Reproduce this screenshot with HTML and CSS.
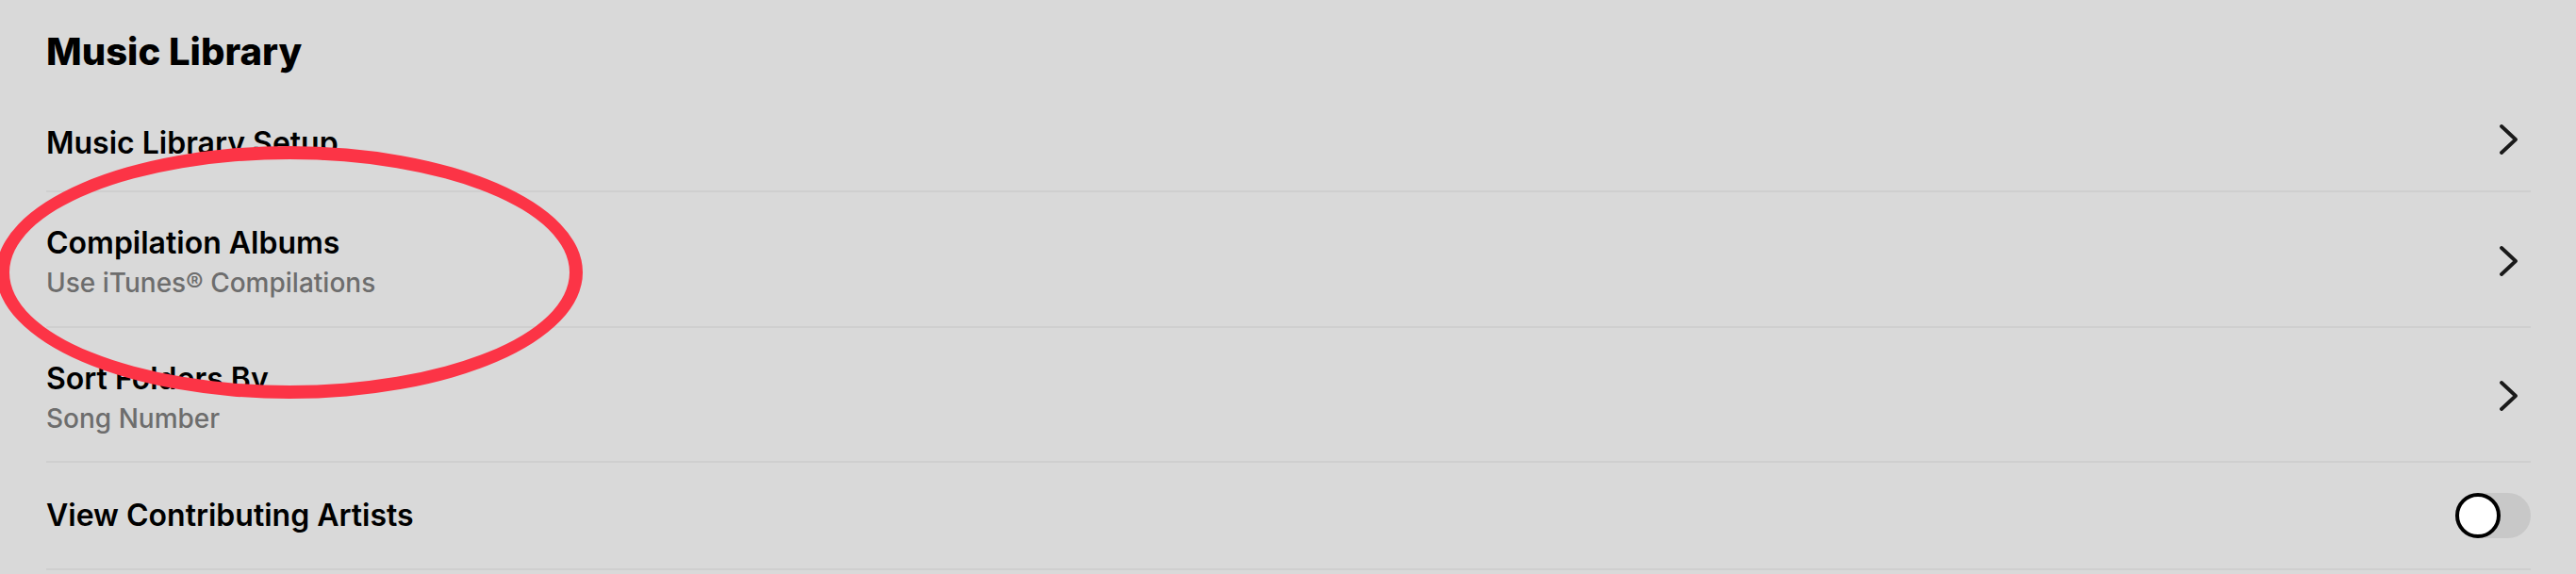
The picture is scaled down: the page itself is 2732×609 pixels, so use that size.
FILE: index.html
```html
<!DOCTYPE html>
<html>
<head>
<meta charset="utf-8">
<link rel="stylesheet" href="styles.css">
</head>
<body>
<div class="page">
  <h1 class="section-title">Music Library</h1>
  <div class="list">
    <div class="row first">
      <div class="text"><div class="title">Music Library Setup</div></div>
      <svg class="chev" width="20" height="32" viewBox="0 0 20 32"><path d="M2 2 L17 16 L2 30" fill="none" stroke="#1a1a1a" stroke-width="3.8" stroke-linecap="round" stroke-linejoin="round"/></svg>
    </div>
    <div class="row two">
      <div class="text"><div class="title">Compilation Albums</div><div class="sub">Use iTunes® Compilations</div></div>
      <svg class="chev" width="20" height="32" viewBox="0 0 20 32"><path d="M2 2 L17 16 L2 30" fill="none" stroke="#1a1a1a" stroke-width="3.8" stroke-linecap="round" stroke-linejoin="round"/></svg>
    </div>
    <div class="row two">
      <div class="text"><div class="title">Sort Folders By</div><div class="sub">Song Number</div></div>
      <svg class="chev" width="20" height="32" viewBox="0 0 20 32"><path d="M2 2 L17 16 L2 30" fill="none" stroke="#1a1a1a" stroke-width="3.8" stroke-linecap="round" stroke-linejoin="round"/></svg>
    </div>
    <div class="row">
      <div class="text"><div class="title">View Contributing Artists</div></div>
      <div class="switch"><div class="knob"></div></div>
    </div>
  </div>
  <div class="annotation"></div>
</div>
</body>
</html>
```
FILE: styles.css
```css
html, body {
  margin: 0;
  padding: 0;
  background: #d9d9d9;
}
.page {
  position: relative;
  width: 2732px;
  height: 609px;
  overflow: hidden;
  padding: 0 48px 0 49px;
  box-sizing: border-box;
  font-family: Inter, "Noto Sans", sans-serif;
  color: #000;
}
.section-title {
  margin: 0;
  padding-top: 32px;
  height: 58px;
  font-size: 40px;
  line-height: 46px;
  font-weight: 800;
  letter-spacing: 0;
}
.list {
  display: flex;
  flex-direction: column;
}
.row {
  display: flex;
  align-items: center;
  justify-content: space-between;
  height: 114px;
  box-sizing: border-box;
  border-bottom: 2px solid #cfcfcf;
}
.row.first {
  padding-top: 11px;
}
.row.first .chev {
  margin-top: -8px;
}
.row.two {
  height: 143.5px;
  padding-top: 8px;
}
.row.two .chev {
  margin-top: -4px;
}
.text {
  display: flex;
  flex-direction: column;
  gap: 9px;
}
.title {
  font-size: 32px;
  line-height: 34px;
  font-weight: 600;
}
.sub {
  font-size: 28px;
  line-height: 32px;
  font-weight: 500;
  color: #6d6d6d;
}
.chev {
  margin-right: 13px;
  margin-top: -2px;
}
.switch {
  position: relative;
  width: 80px;
  height: 48px;
  border-radius: 24px;
  background: #c8c8c8;
}
.knob {
  width: 48px;
  height: 48px;
  border-radius: 50%;
  background: #fff;
  border: 4px solid #000;
  box-sizing: border-box;
}
.annotation {
  position: absolute;
  left: -4px;
  top: 155px;
  width: 622px;
  height: 268px;
  border: 14px solid #fc3446;
  border-radius: 50%;
  box-sizing: border-box;
}
```
